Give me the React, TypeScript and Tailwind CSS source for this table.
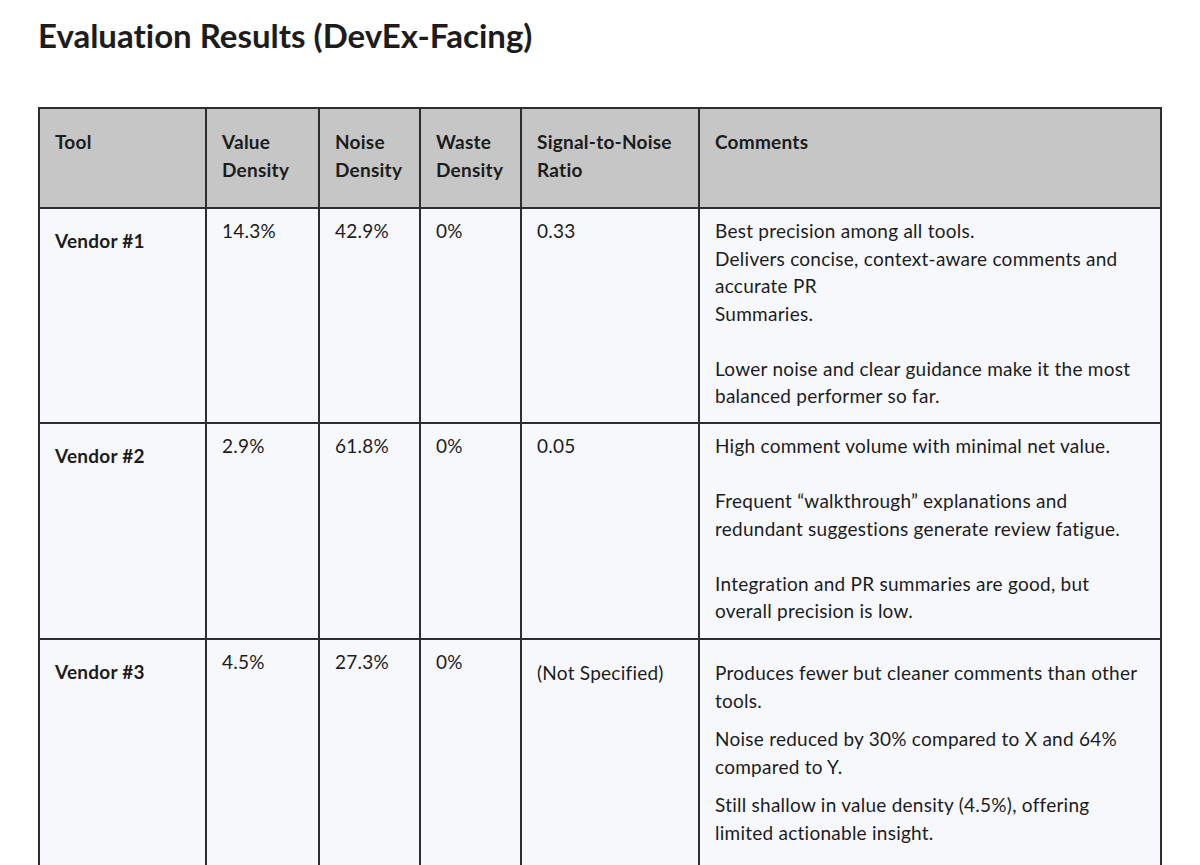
const rows = [
  {
    tool: 'Vendor #1',
    value: '14.3%',
    noise: '42.9%',
    waste: '0%',
    snr: '0.33',
    snrLow: false,
    commentsLow: false,
    height: 'h-[215px]',
    comments: [
      ['Best precision among all tools.', 'Delivers concise, context-aware comments and', 'accurate PR', 'Summaries.'],
      ['Lower noise and clear guidance make it the most', 'balanced performer so far.'],
    ],
    gap: 'mt-[27.5px]',
  },
  {
    tool: 'Vendor #2',
    value: '2.9%',
    noise: '61.8%',
    waste: '0%',
    snr: '0.05',
    snrLow: false,
    commentsLow: false,
    height: 'h-[216px]',
    comments: [
      ['High comment volume with minimal net value.'],
      ['Frequent \u201cwalkthrough\u201d explanations and', 'redundant suggestions generate review fatigue.'],
      ['Integration and PR summaries are good, but', 'overall precision is low.'],
    ],
    gap: 'mt-[27.5px]',
  },
  {
    tool: 'Vendor #3',
    value: '4.5%',
    noise: '27.3%',
    waste: '0%',
    snr: '(Not Specified)',
    snrLow: true,
    commentsLow: true,
    height: 'h-[260px]',
    comments: [
      ['Produces fewer but cleaner comments than other', 'tools.'],
      ['Noise reduced by 30% compared to X and 64%', 'compared to Y.'],
      ['Still shallow in value density (4.5%), offering', 'limited actionable insight.'],
    ],
    gap: 'mt-[11px]',
  },
];

const cell = 'border-2 border-[#2e2e2e] align-top px-[15px]';

export default function App() {
  return (
    <div className="min-h-screen bg-white text-[#1c1c1c] font-['Lato','Liberation_Sans',sans-serif] [font-variant-ligatures:none] pl-[38px] pr-[40px] pt-[12px]">
      <h1 className="text-[33px] font-bold leading-[46px]">Evaluation Results (DevEx-Facing)</h1>

      <table className="mt-[49px] w-[1122px] table-fixed border-collapse text-[19px] leading-[27.5px] tracking-[0.25px]">
        <colgroup>
          <col className="w-[167px]" />
          <col className="w-[113px]" />
          <col className="w-[101px]" />
          <col className="w-[101px]" />
          <col className="w-[178px]" />
          <col className="w-[462px]" />
        </colgroup>
        <thead>
          <tr className="h-[100px] bg-[#c6c6c6] font-bold">
            <th className={`${cell} pt-[19px] text-left font-bold`}>Tool</th>
            <th className={`${cell} pt-[19px] text-left font-bold`}>Value<br />Density</th>
            <th className={`${cell} pt-[19px] text-left font-bold`}>Noise<br />Density</th>
            <th className={`${cell} pt-[19px] text-left font-bold`}>Waste<br />Density</th>
            <th className={`${cell} pt-[19px] text-left font-bold`}>Signal-to-Noise<br />Ratio</th>
            <th className={`${cell} pt-[19px] text-left font-bold`}>Comments</th>
          </tr>
        </thead>
        <tbody>
          {rows.map((r) => (
            <tr key={r.tool} className={`${r.height} bg-[#f7f8fc]`}>
              <td className={`${cell} pt-[18px] font-bold`}>{r.tool}</td>
              <td className={`${cell} pt-[8px]`}>{r.value}</td>
              <td className={`${cell} pt-[8px]`}>{r.noise}</td>
              <td className={`${cell} pt-[8px]`}>{r.waste}</td>
              <td className={`${cell} ${r.snrLow ? 'pt-[19px]' : 'pt-[8px]'}`}>{r.snr}</td>
              <td className={`${cell} ${r.commentsLow ? 'pt-[19px]' : 'pt-[8px]'}`}>
                {r.comments.map((para, i) => (
                  <p key={i} className={i > 0 ? r.gap : ''}>
                    {para.map((line) => (
                      <span key={line} className="block whitespace-nowrap">{line}</span>
                    ))}
                  </p>
                ))}
              </td>
            </tr>
          ))}
        </tbody>
      </table>
    </div>
  );
}
